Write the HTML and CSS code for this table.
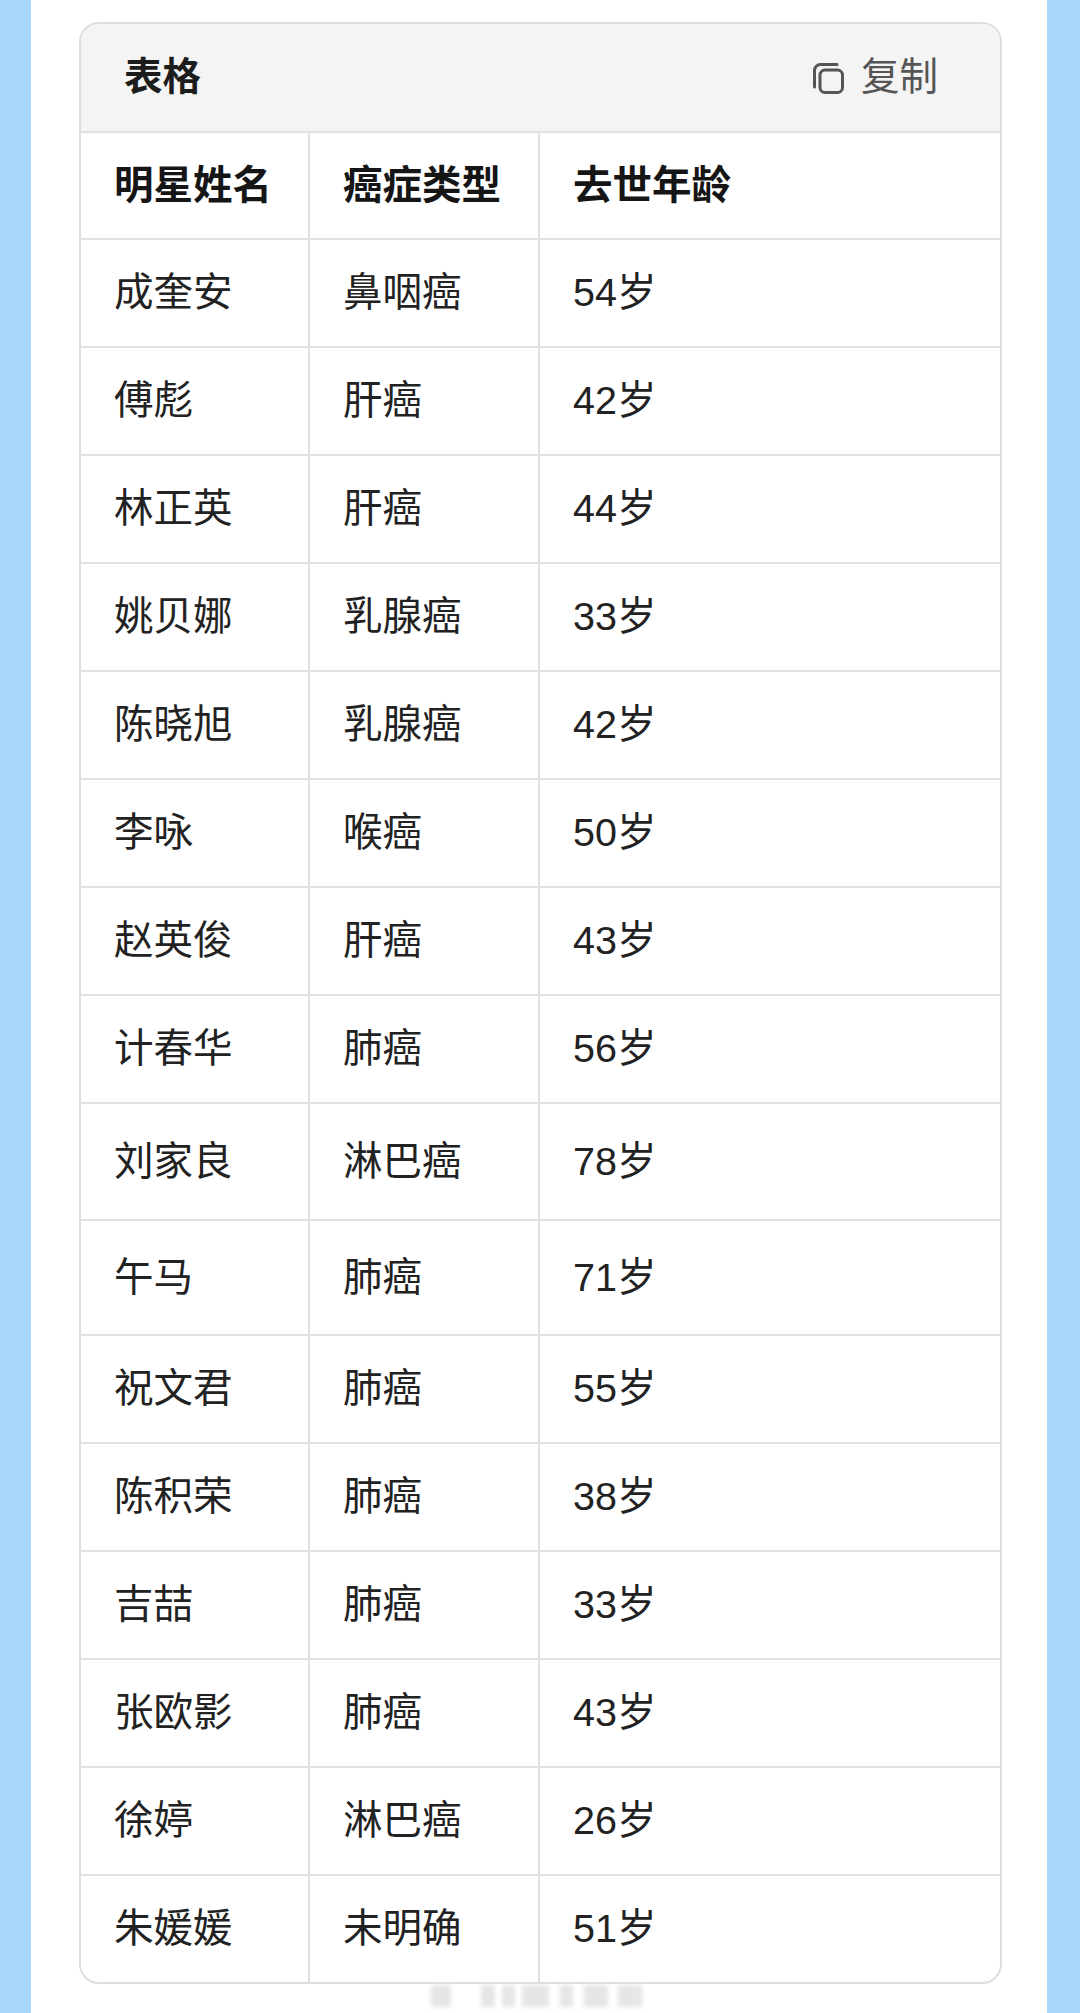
FILE: index.html
```html
<!DOCTYPE html>
<html lang="zh-CN">
<head>
<meta charset="utf-8">
<title>表格</title>
<link rel="stylesheet" href="styles.css">
</head>
<body>
<div class="page">
  <div class="card">
    <div class="card-head">
      <div class="card-title">表格</div>
      <div class="copy">
        <svg class="copy-icon" viewBox="0 0 32 32" width="32" height="32" aria-hidden="true">
          <path d="M2.5 25 V8.5 A6 6 0 0 1 8.5 2.5 H25" fill="none" stroke="#555" stroke-width="3" stroke-linecap="round"/>
          <rect x="8" y="8" width="22.5" height="22.5" rx="5" fill="none" stroke="#555" stroke-width="3"/>
        </svg>
        <span class="copy-text">复制</span>
      </div>
    </div>
    <div class="row row-head"><div class="cell">明星姓名</div><div class="cell">癌症类型</div><div class="cell">去世年龄</div></div>
    <div class="row"><div class="cell">成奎安</div><div class="cell">鼻咽癌</div><div class="cell">54岁</div></div>
    <div class="row"><div class="cell">傅彪</div><div class="cell">肝癌</div><div class="cell">42岁</div></div>
    <div class="row"><div class="cell">林正英</div><div class="cell">肝癌</div><div class="cell">44岁</div></div>
    <div class="row"><div class="cell">姚贝娜</div><div class="cell">乳腺癌</div><div class="cell">33岁</div></div>
    <div class="row"><div class="cell">陈晓旭</div><div class="cell">乳腺癌</div><div class="cell">42岁</div></div>
    <div class="row"><div class="cell">李咏</div><div class="cell">喉癌</div><div class="cell">50岁</div></div>
    <div class="row"><div class="cell">赵英俊</div><div class="cell">肝癌</div><div class="cell">43岁</div></div>
    <div class="row"><div class="cell">计春华</div><div class="cell">肺癌</div><div class="cell">56岁</div></div>
    <div class="row row-tall"><div class="cell">刘家良</div><div class="cell">淋巴癌</div><div class="cell">78岁</div></div>
    <div class="row row-tall2"><div class="cell">午马</div><div class="cell">肺癌</div><div class="cell">71岁</div></div>
    <div class="row"><div class="cell">祝文君</div><div class="cell">肺癌</div><div class="cell">55岁</div></div>
    <div class="row"><div class="cell">陈积荣</div><div class="cell">肺癌</div><div class="cell">38岁</div></div>
    <div class="row"><div class="cell">吉喆</div><div class="cell">肺癌</div><div class="cell">33岁</div></div>
    <div class="row"><div class="cell">张欧影</div><div class="cell">肺癌</div><div class="cell">43岁</div></div>
    <div class="row"><div class="cell">徐婷</div><div class="cell">淋巴癌</div><div class="cell">26岁</div></div>
    <div class="row"><div class="cell">朱媛媛</div><div class="cell">未明确</div><div class="cell">51岁</div></div>
  </div>
  <div class="smudge">
    <span class="s1"></span><span class="s2"></span><span class="s3"></span><span class="s4"></span><span class="s5"></span><span class="s6"></span><span class="s7"></span>
  </div>
</div>
</body>
</html>
```

FILE: styles.css
```css
html, body {
  margin: 0;
  padding: 0;
}
body {
  background: #a6d6fa;
  font-family: "Liberation Sans", "Noto Sans CJK SC", sans-serif;
  color: #222;
}
.page {
  margin: 0 33px 0 31px;
  background: #fff;
  min-height: 2013px;
  padding: 22px 45px 0 48px;
  box-sizing: border-box;
}
.card {
  border: 2px solid #dedede;
  border-radius: 20px;
  overflow: hidden;
  background: #fff;
}
.card-head {
  height: 107px;
  background: #f4f4f4;
  display: flex;
  align-items: center;
  justify-content: space-between;
  padding: 0 62px 0 43px;
}
.card-title {
  font-size: 38.5px;
  font-weight: 700;
  color: #1c1c1c;
  line-height: 1;
}
.copy {
  display: flex;
  align-items: center;
  gap: 17px;
  color: #555;
}
.copy-icon {
  display: block;
}
.copy-text {
  font-size: 38.5px;
  line-height: 1;
}
.row {
  display: grid;
  grid-template-columns: 227px 230px 1fr;
  height: 108px;
  box-sizing: border-box;
  border-top: 2px solid #e1e1e1;
}
.row-head {
  height: 107px;
}
.row-tall {
  height: 117px;
}
.row-tall2 {
  height: 115px;
}
.cell {
  display: flex;
  align-items: center;
  padding-left: 33px;
  font-size: 39.5px;
  line-height: 1;
  color: #222;
}
.cell + .cell {
  border-left: 2px solid #e1e1e1;
}
.row-head .cell {
  font-weight: 700;
  color: #151515;
}
.smudge {
  display: flex;
  margin: 1px 0 0 352px;
  height: 22px;
  filter: blur(2px);
}
.smudge span {
  display: block;
  height: 22px;
  background: #e6e6e6;
}
.smudge .s1 { width: 20px; margin-right: 30px; }
.smudge .s2 { width: 14px; margin-right: 7px; }
.smudge .s3 { width: 13px; margin-right: 7px; }
.smudge .s4 { width: 27px; margin-right: 11px; }
.smudge .s5 { width: 13px; margin-right: 11px; }
.smudge .s6 { width: 24px; margin-right: 10px; }
.smudge .s7 { width: 24px; }
```
